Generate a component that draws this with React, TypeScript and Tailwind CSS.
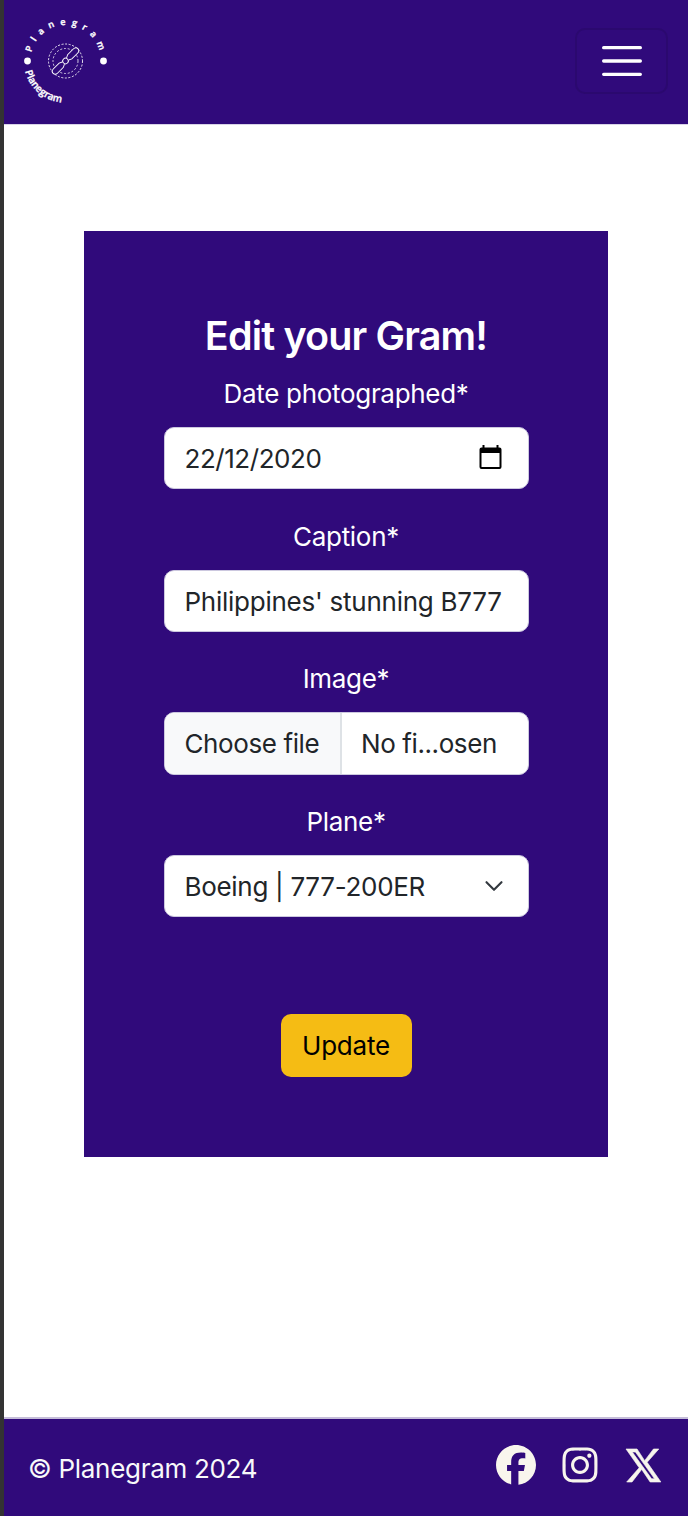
import type { ReactNode } from "react";
import { FaFacebook, FaInstagram } from "react-icons/fa6";

function Logo() {
  return (
    <svg width="90" height="90" viewBox="20 16 90 90" fill="none" stroke="#fff" role="img">
      <path id="ring-top" stroke="none" d="M31.4 52.2 A35 35 0 0 1 100.500 58" />
      <path id="ring-bottom" stroke="none" d="M25.2 71.2 A41.5 41.5 0 0 0 75 101.5" />
      <g fill="#fff" stroke="#fff" strokeWidth="0.35" className="font-['Open_Sans',sans-serif] font-semibold">
        <text fontSize="9">
          <textPath href="#ring-top" textLength="93" lengthAdjust="spacing">Planegram</textPath>
        </text>
        <text fontSize="10">
          <textPath href="#ring-bottom" textLength="51" lengthAdjust="spacingAndGlyphs">Planegram</textPath>
        </text>
      </g>
      <circle cx="27.5" cy="61" r="3.4" fill="#fff" stroke="none" />
      <circle cx="103.5" cy="61" r="3.4" fill="#fff" stroke="none" />
      <circle cx="65.5" cy="61" r="17" strokeWidth="0.9" strokeDasharray="2 1.6" />
      <circle cx="65.5" cy="61" r="12.5" strokeWidth="0.8" strokeDasharray="2 1.8" />
      <g transform="rotate(-45 65.5 61)" strokeWidth="0.95" fill="#300a7b">
        <path d="M62.5 59.5 L59.5 58 H51.5 Q48 58 48 61 Q48 64 51.5 64 H59.5 L62.5 62.5" />
        <path d="M68.5 59.5 L71.5 58 H79.5 Q83 58 83 61 Q83 64 79.5 64 H71.5 L68.5 62.5" />
        <circle cx="65.5" cy="61" r="2.8" />
      </g>
    </svg>
  );
}

function Field({ label, children }: { label: string; children: ReactNode }) {
  return (
    <div className="h-[142.67px] w-full">
      <label className="mb-[13px] block h-10 text-center leading-10 tracking-[-0.3px] text-white">{label}</label>
      <div className="flex h-[62.5px] w-full items-center overflow-hidden rounded-[10px] border-[1.5px] border-[#ccc8df] bg-white tracking-[-0.3px] whitespace-nowrap text-[#212529]">
        {children}
      </div>
    </div>
  );
}

export default function App() {
  return (
    <div className="flex h-[1516px] w-[688px] flex-col border-l-4 border-[#333] bg-white font-[Inter,sans-serif] text-[26px]">
      <header className="flex h-[125px] shrink-0 items-center justify-between border-b border-[#d8d3e7] bg-[#300a7b] pr-5 pb-0.5 pl-4">
        <Logo />
        <button aria-label="Menu" className="flex h-[66px] w-[93px] items-center justify-center rounded-[10px] border-2 border-[#2b096f]">
          <svg width="50" height="50" viewBox="0 0 30 30" stroke="#fff" strokeWidth="2" strokeLinecap="round">
            <path d="M4 7h22M4 15h22M4 23h22" />
          </svg>
        </button>
      </header>

      <main className="flex-1 px-20 pt-[106px]">
        <form className="flex h-[926px] w-[524px] flex-col items-center bg-[#300a7b] pr-[79.5px] pl-[79.5px] pt-[80px]">
          <h1 className="mb-[14.5px] h-[48px] shrink-0 text-[39.5px] leading-[51px] font-semibold tracking-[-0.85px] text-white">Edit your Gram!</h1>
          <div className="w-full pt-[0.4px]">
            <Field label="Date photographed*">
              <span className="flex-1 pl-5 tracking-[-0.45px]">22/12/2020</span>
              <svg className="mr-[26px] mb-0.5" width="23" height="25" viewBox="0 0 23 25">
                <path fill="#000" fillRule="evenodd" d="M3.5 0H5.5v2.5h12V0H19.5v2.5h1A2 2 0 0 1 22.5 4.5V22a2 2 0 0 1-2 2H2.5a2 2 0 0 1-2-2V4.5a2 2 0 0 1 2-2h1zM2.5 8v14h18V8z" />
              </svg>
            </Field>
            <Field label="Caption*">
              <span className="pt-px pl-5 tracking-[-0.25px]">Philippines' stunning B777</span>
            </Field>
            <Field label="Image*">
              <span className="flex h-full w-[177px] shrink-0 items-center border-r-2 border-[#dee2e6] bg-[#f8f9fa] pl-5 tracking-[-0.4px]">Choose file</span>
              <span className="pl-[19.5px] tracking-[-0.4px]">No fi...osen</span>
            </Field>
            <Field label="Plane*">
              <span className="flex-1 pl-5">Boeing | 777-200ER</span>
              <svg className="mr-[24px]" width="20" height="20" viewBox="0 0 16 16" fill="none" stroke="#343a40" strokeWidth="1.7" strokeLinecap="round" strokeLinejoin="round">
                <path d="m2 5 6 6 6-6" />
              </svg>
            </Field>
          </div>
          <button type="button" className="mt-[69.6px] h-[63px] w-[131px] shrink-0 rounded-[10px] bg-[#f5bc14] tracking-[-0.2px] text-black">Update</button>
        </form>
      </main>

      <footer className="flex h-[99px] shrink-0 items-center justify-between border-t-2 border-[#c5bdd9] bg-[#300a7b] pr-[27px] pl-[24px]">
        <p className="pt-[1px] tracking-[-0.3px] text-[#f8f9fa]">© Planegram 2024</p>
        <div className="flex items-center gap-6 pb-[5px] text-[#f8f5ed]">
          <FaFacebook size={40} />
          <FaInstagram className="h-10 w-10" />
          <svg className="ml-0.5 overflow-visible" width="35" height="33" viewBox="1.25 1.25 21.65 20.5" preserveAspectRatio="none" fill="currentColor" stroke="currentColor" strokeWidth="0.4">
            <path d="M18.244 1.25h3.308l-7.227 8.26 8.502 12.24H16.17l-5.214-7.817L4.99 21.75H1.68l7.73-8.835L1.254 1.25H8.08l4.713 7.231zm-1.161 18.52h1.833L7.084 3.126H5.117z" />
          </svg>
        </div>
      </footer>
    </div>
  );
}
